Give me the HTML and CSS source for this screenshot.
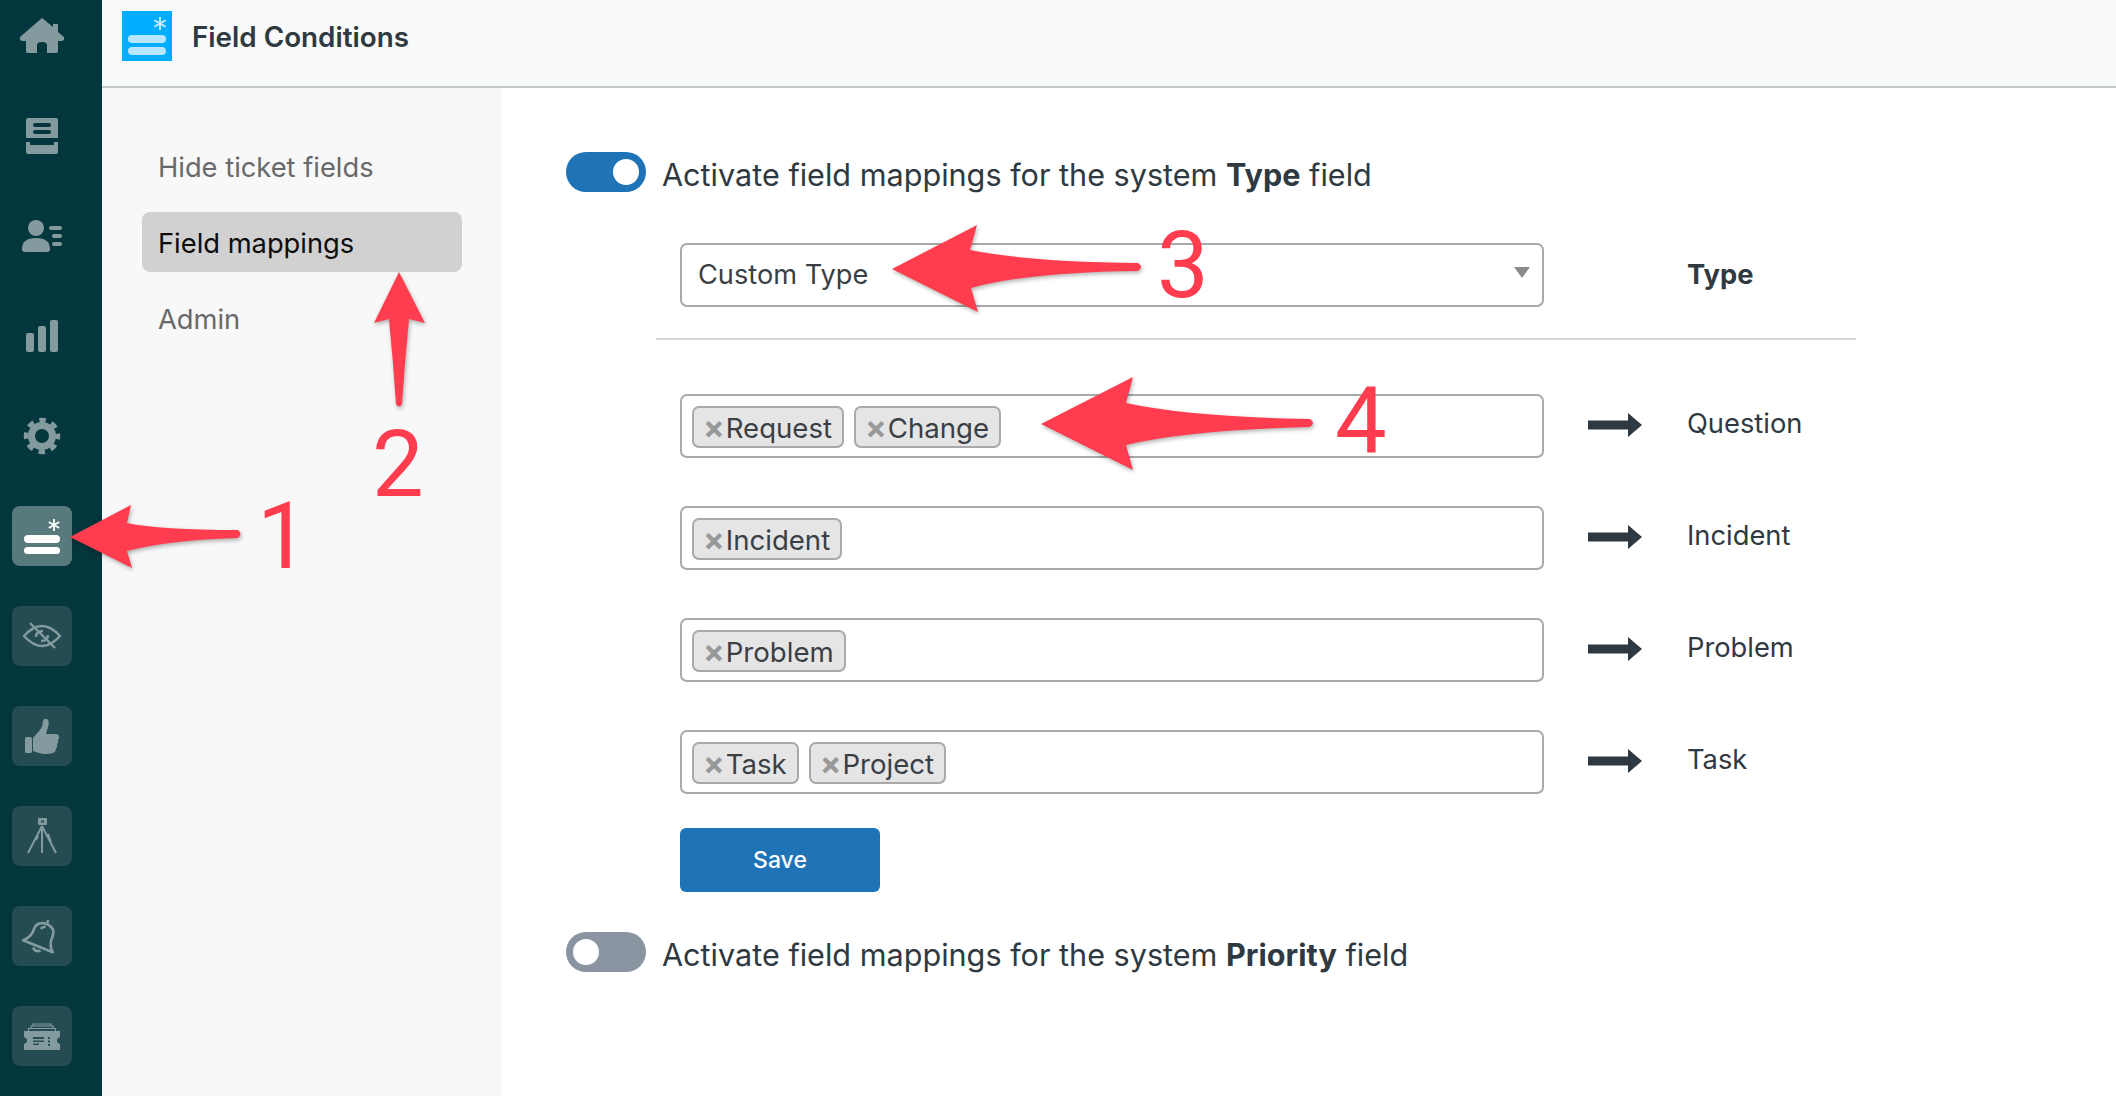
FILE: index.html
```html
<!DOCTYPE html>
<html lang="en">
<head>
    <meta charset="UTF-8">
    <title>Field Conditions</title>
    <link rel="stylesheet" href="styles.css">
</head>
<body>
<div class="app">
    <aside class="rail">
        <div class="rail-item">
            <svg viewBox="0 0 60 60"><path fill-rule="evenodd" d="M30 12 L41 21 V18 H46 V26 L52 31 Q53 35 49 35 H46 V45 Q46 47 44 47 H35 V39 Q35 36 30 36 Q25 36 25 39 V47 H16 Q14 47 14 45 V35 H11 Q7 35 8 31 Z"/></svg>
        </div>
        <div class="rail-item">
            <svg viewBox="0 0 60 60"><path fill-rule="evenodd" d="M16 12 H44 Q46 12 46 14 V32 H14 V14 Q14 12 16 12 Z M23 17 Q21 17 21 19 Q21 21 23 21 H37 Q39 21 39 19 Q39 17 37 17 Z M23 24 Q21 24 21 26 Q21 28 23 28 H37 Q39 28 39 26 Q39 24 37 24 Z"/><path d="M14 36 H18 V39 H42 V36 H46 V46 Q46 48 44 48 H16 Q14 48 14 46 Z"/></svg>
        </div>
        <div class="rail-item">
            <svg viewBox="0 0 60 60"><circle cx="24" cy="22" r="8"/><path d="M10 43 Q10 32 24 32 Q38 32 38 43 Q38 46 35 46 H13 Q10 46 10 43 Z"/><rect x="37" y="20" width="13" height="4" rx="2"/><rect x="40" y="28" width="10" height="4" rx="2"/><rect x="40" y="36" width="10" height="4" rx="2"/></svg>
        </div>
        <div class="rail-item">
            <svg viewBox="0 0 60 60"><rect x="14" y="27" width="8" height="19" rx="2"/><rect x="26" y="20" width="8" height="26" rx="2"/><rect x="38" y="14" width="8" height="32" rx="2"/></svg>
        </div>
        <div class="rail-item">
            <svg viewBox="0 0 60 60"><circle class="line" cx="30" cy="30" r="10.5" stroke-width="7"/><circle class="line" cx="30" cy="30" r="16" stroke-width="4.5" stroke-dasharray="6.5 6.07" stroke-dashoffset="3.2"/></svg>
        </div>
        <div class="rail-item active">
            <svg viewBox="0 0 60 60"><rect x="12" y="29" width="36" height="8" rx="4"/><rect x="12" y="41" width="36" height="7" rx="3.5"/><path class="line" stroke-width="1.8" d="M42 13 V25 M36.8 16 L47.2 22 M47.2 16 L36.8 22"/></svg>
        </div>
        <div class="rail-item tile">
            <svg viewBox="0 0 60 60"><path class="line" stroke-width="2.4" d="M12 30 Q21 20 30 20 Q39 20 48 30 Q39 40 30 40 Q21 40 12 30 Z M24 31 Q24 25 31 25 M36 29 Q36 35 29 35 M18 17 L43 42"/></svg>
        </div>
        <div class="rail-item tile">
            <svg viewBox="0 0 60 60"><rect x="13" y="31" width="7" height="16" rx="1.5"/><path d="M21 32 L28 24 Q31 20 31 15 Q32 12 35 13 Q38 15 36 21 L34 28 H44 Q47 28 47 31 Q47 33 46 34 Q47 36 45 38 Q46 41 44 42 Q44 46 41 47 Q34 49 27 47 L21 45 Z"/></svg>
        </div>
        <div class="rail-item tile">
            <svg viewBox="0 0 60 60"><path fill-rule="evenodd" d="M27 12 H34 Q35 12 35 13 V18 Q35 19 34 19 H27 Q26 19 26 18 V13 Q26 12 27 12 Z M29 14.5 V16.5 H32 V14.5 Z"/><path class="line" stroke-width="2" d="M30 20 L16 47 M30 20 V47 M30 20 L44 47 M26 30 L24 34 M36 28 L39 36"/></svg>
        </div>
        <div class="rail-item tile">
            <svg viewBox="0 0 60 60"><g transform="rotate(22 30 30)"><path class="line" stroke-width="2.6" stroke-linejoin="round" d="M14 41 H46 Q41 37 40 30 V26 Q40 18 30 17 Q20 18 20 26 V30 Q19 37 14 41 Z M26 44 Q30 48 34 44 M30 17 V13 M26 24 Q27 21 30 20"/></g></svg>
        </div>
        <div class="rail-item tile">
            <svg viewBox="0 0 60 60"><path fill-rule="evenodd" d="M12 25 H48 V31 Q45 32 45 34.500 Q45 37 48 38 V44 H12 V38 Q15 37 15 34.500 Q15 32 12 31 Z M21 31 V33 H32 V31 Z M21 34.500 V36 H32 V34.500 Z M21 37.500 V39 H27 V37.500 Z M36 31 V33 H38 V31 Z M36 34.500 V36.500 H38 V34.500 Z M36 38 V40 H38 V38 Z"/><path class="line" stroke-width="1.2" d="M16.500 25 V22.500 H43.500 V25 M19 22.500 V20 H41 V22.500 M21 20 V18 H39 V20"/></svg>
        </div>
    </aside>

    <div class="content">
        <header class="topbar">
            <svg class="app-logo" viewBox="0 0 50 50"><rect width="50" height="50" fill="#00aeff"/><rect x="6" y="24" width="38" height="8" rx="4" fill="#b9e6ff"/><rect x="6" y="36" width="38" height="8" rx="4" fill="#b9e6ff"/><path stroke="#cdeeff" stroke-width="1.8" d="M38 6 V19 M32.400 9.300 L43.600 15.700 M43.600 9.300 L32.400 15.700"/></svg>
            <h1 class="app-title">Field Conditions</h1>
        </header>

        <div class="split">
            <nav class="side-nav">
                <a class="nav-link">Hide ticket fields</a>
                <a class="nav-link current">Field mappings</a>
                <a class="nav-link">Admin</a>
            </nav>

            <main class="main">
                <div class="toggle-row">
                    <span class="toggle on"></span>
                    <span class="toggle-text">Activate field mappings for the system <b>Type</b> field</span>
                </div>

                <section class="mapping">
                    <div class="map-head">
                        <div class="field select">Custom Type</div>
                        <b class="map-label">Type</b>
                    </div>
                    <div class="map-rows">
                        <div class="map-row">
                            <div class="field">
                                <span class="tag"><i>×</i>Request</span>
                                <span class="tag"><i>×</i>Change</span>
                            </div>
                            <svg class="arrow" viewBox="0 0 54 24"><path d="M0 7.500 H40 V0 L54 12 L40 24 V16.500 H0 Z"/></svg>
                            <span class="map-label">Question</span>
                        </div>
                        <div class="map-row">
                            <div class="field">
                                <span class="tag"><i>×</i>Incident</span>
                            </div>
                            <svg class="arrow" viewBox="0 0 54 24"><path d="M0 7.500 H40 V0 L54 12 L40 24 V16.500 H0 Z"/></svg>
                            <span class="map-label">Incident</span>
                        </div>
                        <div class="map-row">
                            <div class="field">
                                <span class="tag"><i>×</i>Problem</span>
                            </div>
                            <svg class="arrow" viewBox="0 0 54 24"><path d="M0 7.500 H40 V0 L54 12 L40 24 V16.500 H0 Z"/></svg>
                            <span class="map-label">Problem</span>
                        </div>
                        <div class="map-row">
                            <div class="field">
                                <span class="tag"><i>×</i>Task</span>
                                <span class="tag"><i>×</i>Project</span>
                            </div>
                            <svg class="arrow" viewBox="0 0 54 24"><path d="M0 7.500 H40 V0 L54 12 L40 24 V16.500 H0 Z"/></svg>
                            <span class="map-label">Task</span>
                        </div>
                    </div>
                    <button class="save">Save</button>
                </section>

                <div class="toggle-row">
                    <span class="toggle"></span>
                    <span class="toggle-text">Activate field mappings for the system <b>Priority</b> field</span>
                </div>
            </main>
        </div>
    </div>
</div>

<!-- annotations drawn on top of the screenshot -->
<svg class="callouts" viewBox="0 0 2116 1096">
    <path d="M70 537 L131 505 L127 523 Q160 530 238 530 Q243 534 238 538 Q170 540 127 551 L132 568 Z"/>
    <path d="M399 272 L425 323 L409 319 Q405 360 402 404 Q399 409 396 404 Q393 360 389 319 L374 323 Z"/>
    <path d="M892 269 L977 225 L970 250 Q1030 262 1138 263 Q1144 267 1138 271 Q1030 272 971 288 L978 312 Z"/>
    <path d="M1041 424 L1133 377 L1126 403 Q1190 417 1310 419 Q1316 423 1310 427 Q1190 430 1126 445 L1133 470 Z"/>
</svg>
<span class="num num-1">1</span>
<span class="num num-2">2</span>
<span class="num num-3">3</span>
<span class="num num-4">4</span>
</body>
</html>
```

FILE: styles.css
```css
*{
    margin: 0;
    padding: 0;
    box-sizing: border-box;
}
body{
    position: relative;
    width: 2116px;
    height: 1096px;
    overflow: hidden;
    font-family: "Inter", "Liberation Sans", sans-serif;
    color: #2f3941;
    background: #fff;
}
.app{
    display: flex;
    height: 100%;
}

/* left rail */
.rail{
    width: 102px;
    flex: none;
    background: #04363d;
    display: flex;
    flex-direction: column;
    gap: 40px;
    padding: 6px 0 0 12px;
}
.rail-item{
    width: 60px;
    height: 60px;
    border-radius: 8px;
}
.rail-item svg{
    display: block;
    width: 60px;
    height: 60px;
    fill: #839b9e;
    stroke: none;
}
.rail-item svg .line{
    fill: none;
    stroke: #839b9e;
}
.rail-item.tile{
    background: #254c53;
}
.rail-item.active{
    background: #587a7c;
}
.rail-item.active svg{
    fill: #fff;
}
.rail-item.active svg .line{
    stroke: #fff;
}

/* top bar */
.content{
    flex: 1;
    display: flex;
    flex-direction: column;
}
.topbar{
    height: 88px;
    flex: none;
    display: flex;
    align-items: center;
    gap: 20px;
    padding: 0 0 14px 20px;
    background: #f8f9f9;
    border-bottom: 2px solid #c2c8cc;
}
.app-logo{
    width: 50px;
    height: 50px;
}
.app-title{
    font-size: 27.8px;
    font-weight: 600;
    color: #2f3941;
    position: relative;
    top: 1px;
}

/* second column */
.split{
    flex: 1;
    display: flex;
}
.side-nav{
    width: 400px;
    flex: none;
    background: #f8f8f8;
    padding: 48px 40px 0;
    display: flex;
    flex-direction: column;
    gap: 16px;
}
.nav-link{
    height: 60px;
    display: flex;
    align-items: center;
    padding: 3px 0 0 16px;
    border-radius: 8px;
    font-size: 27.3px;
    color: #68696a;
}
.nav-link.current{
    background: #d1d1d1;
    color: #0d0d0d;
}

/* main form */
.main{
    flex: 1;
    padding: 64px 0 0 64px;
}
.toggle-row{
    display: flex;
    align-items: center;
    gap: 16px;
    height: 40px;
}
.toggle{
    position: relative;
    width: 80px;
    height: 40px;
    flex: none;
    border-radius: 20px;
    background: #8a95a1;
}
.toggle::after{
    content: "";
    position: absolute;
    top: 7px;
    left: 7px;
    width: 26px;
    height: 26px;
    border-radius: 50%;
    background: #fff;
}
.toggle.on{
    background: #1f73b7;
}
.toggle.on::after{
    left: 47px;
}
.toggle-text{
    font-size: 30.6px;
    position: relative;
    top: 2px;
}
.toggle-text b{
    font-weight: 700;
}
.mapping{
    width: 1200px;
    margin: 52px 0 40px 90px;
}
.map-head{
    display: flex;
    align-items: center;
    height: 96px;
    padding: 0 0 32px 24px;
    border-bottom: 2px solid #d3d6d9;
}
.field{
    width: 864px;
    height: 64px;
    flex: none;
    display: flex;
    align-items: center;
    gap: 10px;
    padding: 2px 0 0 10px;
    border: 2px solid #a9a9a9;
    border-radius: 7px;
    background: #fff;
}
.select{
    position: relative;
    padding: 0 0 2px 16px;
    font-size: 27.2px;
    color: #3a3f45;
}
.select::after{
    content: "";
    position: absolute;
    right: 12px;
    top: 22px;
    border: 8px solid transparent;
    border-top: 11px solid #8c8c8c;
    border-bottom: 0;
}
.map-head .map-label{
    margin: 0 0 2px 143px;
    font-weight: 700;
}
.map-label{
    font-size: 27.3px;
    margin-bottom: 6px;
}
.map-rows{
    display: flex;
    flex-direction: column;
    gap: 48px;
    padding: 54px 0 0 24px;
}
.map-row{
    display: flex;
    align-items: center;
}
.tag{
    height: 42px;
    display: flex;
    align-items: center;
    padding: 2px 10px 0 9px;
    border: 2px solid #a9a9a9;
    border-radius: 7px;
    background: #e5e5e5;
    font-size: 27.6px;
    color: #3a3f45;
}
.tag i{
    font-style: normal;
    font-size: 32px;
    line-height: 32px;
    font-weight: 700;
    color: #999;
    margin-right: 1px;
}
.arrow{
    width: 54px;
    height: 24px;
    margin: 0 45px 3px 44px;
    fill: #2f3941;
}
.save{
    display: block;
    width: 200px;
    height: 64px;
    margin: 34px 0 0 24px;
    border: 0;
    border-radius: 6px;
    background: #1f73b7;
    color: #fff;
    font-family: inherit;
    font-size: 23px;
    font-weight: 500;
}

/* red annotations */
.callouts{
    position: absolute;
    left: 0;
    top: 0;
    width: 2116px;
    height: 1096px;
    fill: #ff3d4e;
    filter: drop-shadow(1px 2px 2px rgba(0,0,0,.3));
}
.num{
    position: absolute;
    font-family: "Roboto", sans-serif;
    font-size: 92px;
    line-height: 92px;
    color: #ff3d4e;
}
.num-1{ left: 257px; top: 491px; }
.num-2{ left: 372px; top: 419px; }
.num-3{ left: 1157px; top: 220px; }
.num-4{ left: 1335px; top: 375px; }
```
